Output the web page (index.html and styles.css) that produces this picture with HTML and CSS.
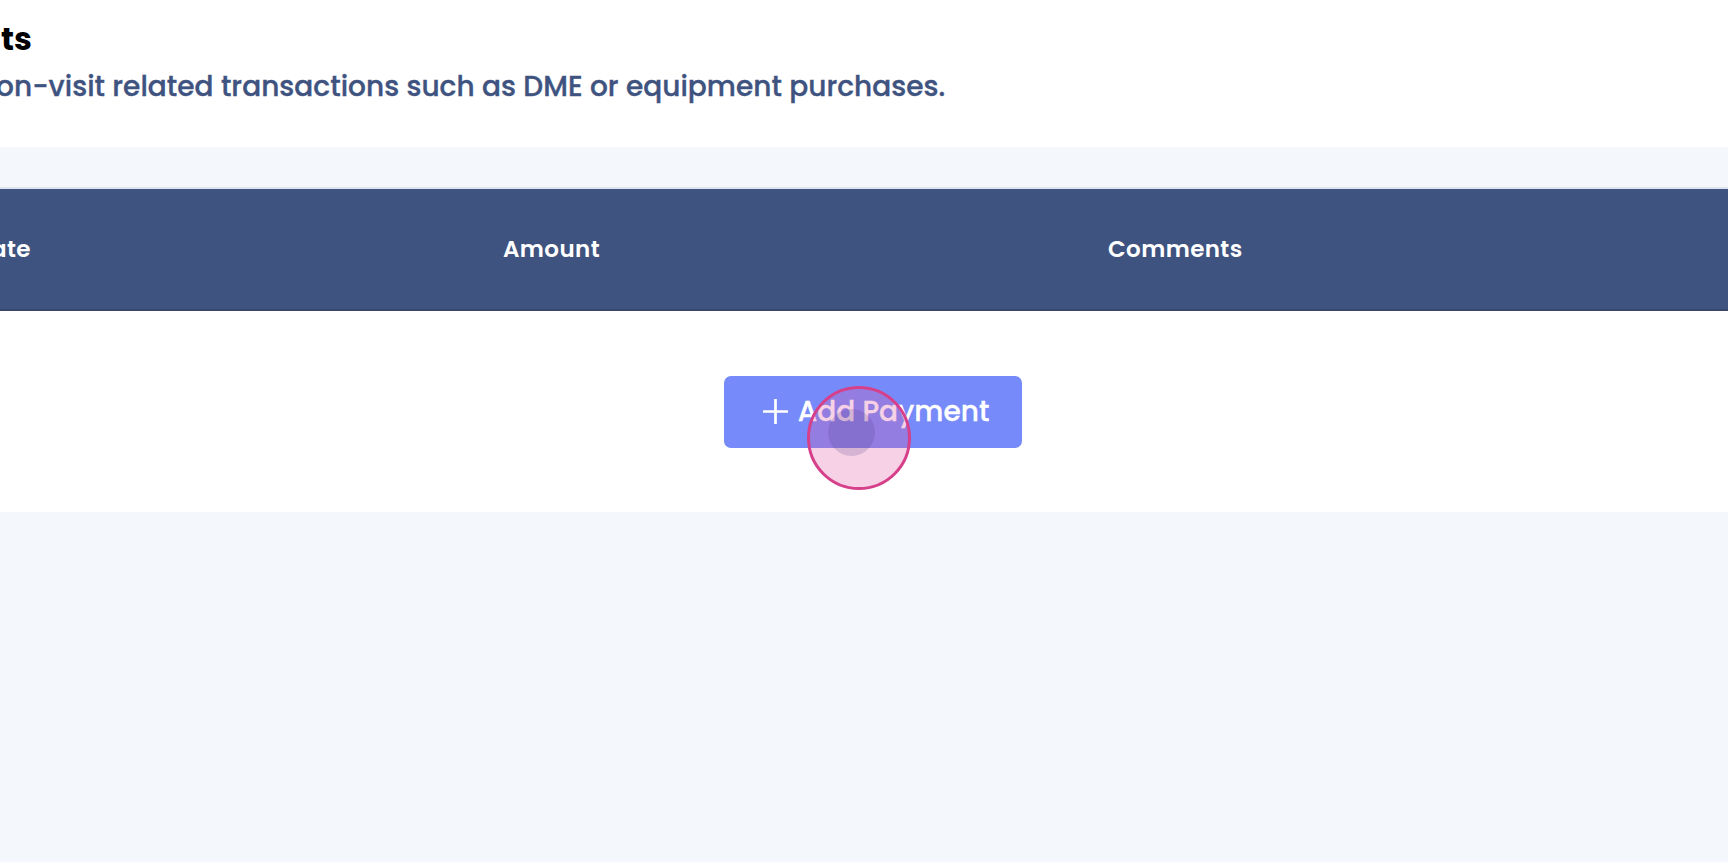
FILE: index.html
```html
<!DOCTYPE html>
<html lang="en">
<head>
<meta charset="utf-8">
<title>Payments</title>
<link rel="stylesheet" href="styles.css">
</head>
<body>
  <header class="page-head">
    <h1 class="page-title">Payments</h1>
    <p class="page-sub">Record non-visit related transactions such as DME or equipment purchases.</p>
  </header>
  <main class="band">
    <section class="table">
      <div class="thead">
        <div class="th th-first">Date</div>
        <div class="th">Amount</div>
        <div class="th">Comments</div>
        <div class="th"></div>
      </div>
      <div class="tbody">
        <button class="add-btn" type="button">
          <svg class="plus" viewBox="0 0 27 27" width="27" height="27" aria-hidden="true"><path d="M13.5 1v25M1 13.5h25" stroke="#fff" stroke-width="2.7" fill="none"/></svg>
          <span>Add Payment</span>
        </button>
        <span class="cursor"><span class="cursor-dot"></span></span>
      </div>
    </section>
  </main>
</body>
</html>
```
FILE: styles.css
```css
html, body {
  margin: 0;
  padding: 0;
}
body {
  background: #ffffff;
  font-family: "Poppins", Inter, "Open Sans", sans-serif;
  overflow: hidden;
  height: 862px;
  display: flex;
  flex-direction: column;
}
.page-head {
  height: 147px;
  box-sizing: border-box;
  padding-top: 19px;
  margin-left: -120px;
}
.page-title {
  margin: 0 0 0 -16px;
  font-size: 32px;
  line-height: 40px;
  font-weight: 700;
  color: #000;
}
.page-sub {
  margin: 10px 0 0 -9px;
  font-size: 28px;
  line-height: 36px;
  font-weight: 500;
  letter-spacing: 0.03px;
  color: #3f5380;
  -webkit-text-stroke: 0.35px #3f5380;
}
.band {
  flex: 1;
  background: #f4f7fc;
  padding-top: 40px;
}
.table {
  margin-left: -120px;
  width: 1983px;
}
.thead {
  display: grid;
  grid-template-columns: 525px 605px 600px 1fr;
  height: 120px;
  background: #3f5380;
  border-top: 2px solid #dfe4ec;
  border-bottom: 2px solid #37476e;
}
.th {
  padding-left: 98px;
  display: flex;
  align-items: center;
  color: #ffffff;
  font-size: 23px;
  font-weight: 600;
  letter-spacing: 0.4px;
}
.th-first {
  padding-left: 94px;
}
.tbody {
  position: relative;
  height: 201px;
  background: #ffffff;
  display: flex;
  align-items: center;
  justify-content: center;
}
.add-btn {
  width: 298px;
  height: 72px;
  margin-left: 2px;
  border: none;
  border-radius: 7px;
  background: #768bf9;
  color: #ffffff;
  display: flex;
  align-items: center;
  justify-content: center;
  gap: 9px;
  font-family: inherit;
  font-size: 28px;
  font-weight: 500;
  -webkit-text-stroke: 0.3px #ffffff;
  padding: 0 0 0 6px;
  cursor: pointer;
}
.plus {
  display: block;
}
.cursor {
  position: absolute;
  left: 927px;
  top: 75px;
  width: 98px;
  height: 98px;
  border-radius: 50%;
  border: 3px solid #d6408b;
  background: rgba(228, 90, 160, 0.28);
  display: flex;
  align-items: center;
  justify-content: center;
}
.cursor-dot {
  width: 47px;
  height: 47px;
  border-radius: 50%;
  background: rgba(80, 60, 140, 0.2);
  margin: -12px 0 0 -16px;
}
```
